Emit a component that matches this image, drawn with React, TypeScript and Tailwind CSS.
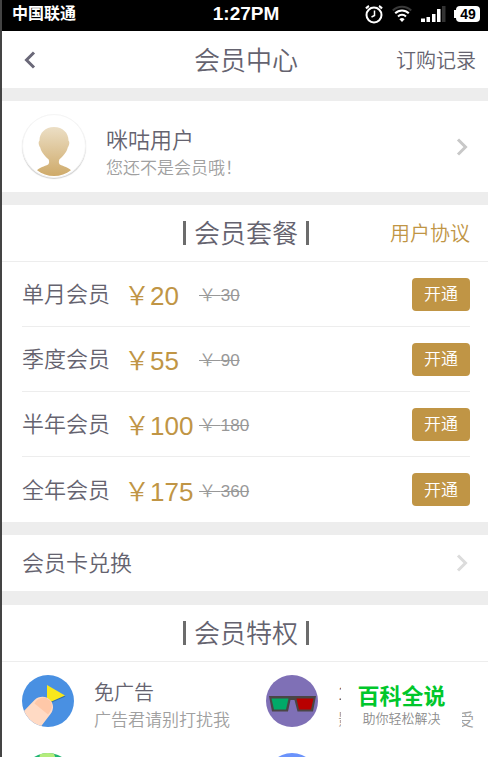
import { ReactNode } from "react";

interface Plan {
  name: string;
  price: number;
  oldPrice: number;
}

const plans: Plan[] = [
  { name: "单月会员", price: 20, oldPrice: 30 },
  { name: "季度会员", price: 55, oldPrice: 90 },
  { name: "半年会员", price: 100, oldPrice: 180 },
  { name: "全年会员", price: 175, oldPrice: 360 },
];

function Chevron({ className, left }: { className: string; left?: boolean }) {
  return (
    <svg viewBox="0 0 12 18" className={`w-3 h-[18px] shrink-0 ${className}`} fill="none" stroke="currentColor" strokeWidth="3" aria-hidden="true">
      <path d={left ? "M10 1.5 2.5 9 10 16.5" : "M2 1.5 9.5 9 2 16.5"} />
    </svg>
  );
}

function StatusBar() {
  return (
    <div className="grid grid-cols-[1fr_auto_1fr] items-center h-[31px] pb-1 pl-2.5 pr-2 bg-black text-white">
      <span className="text-base leading-6 font-bold">中国联通</span>
      <span className="text-[19px] leading-6 font-bold">1:27PM</span>
      <div className="flex items-center justify-end gap-2">
        <svg viewBox="0 0 20 20" className="w-5 h-5" fill="none" stroke="white" strokeWidth="2" aria-hidden="true">
          <circle cx="10" cy="11" r="7.5" />
          <path d="M10.5 6.5v5L7.5 13" strokeWidth="1.5" />
          <path d="M2 4.5A10 10 0 0 1 5 2M18 4.5A10 10 0 0 0 15 2" />
        </svg>
        <svg viewBox="0 0 20 18" className="w-5 h-[18px]" fill="none" stroke="white" strokeWidth="2" aria-hidden="true">
          <path d="M.8 5.5a13 13 0 0 1 18.400 0" stroke="#3a3a3a" />
          <path d="M3.200 8.300a9.600 9.600 0 0 1 13.600 0M6 11.500a5.700 5.700 0 0 1 8 0" />
          <path d="m10 17-2.600-2.800a3.800 3.800 0 0 1 5.200 0Z" fill="white" stroke="none" />
        </svg>
        <svg viewBox="0 0 26 18" className="w-[26px] h-[18px]" fill="white" aria-hidden="true">
          <path d="M1 13.500h4V17H1zM6.500 12h3.500v5H6.500zM12 9h3.500v8H12zM17 4h3.500v13H17z" />
          <path d="M22 1h3.500v16H22z" fill="#333" />
        </svg>
        <div className="flex items-center">
          <span className="w-[2px] h-2 bg-white" />
          <span className="w-6 h-4 rounded-sm bg-white text-black text-sm leading-4 font-bold text-center">49</span>
        </div>
      </div>
    </div>
  );
}

function SectionTitle({ children, action }: { children: ReactNode; action?: ReactNode }) {
  return (
    <div className="grid grid-cols-[1fr_auto_1fr] items-center h-[57px] pl-5 pr-[18px] border-b border-[#ededed]">
      <h2 className="col-start-2 flex items-center gap-2 text-[26px] leading-8">
        <span className="w-[3px] h-6 bg-[#6c6c6c]" />
        <span className="pt-0.5">{children}</span>
        <span className="w-[3px] h-6 bg-[#6c6c6c]" />
      </h2>
      {action}
    </div>
  );
}

function Avatar() {
  return (
    <div className="w-16 h-16 mb-0.5 shrink-0 rounded-full bg-white border border-[#f5f5f5] shadow-[0_1px_1px_#d0d0d0] overflow-hidden">
      <svg viewBox="0 0 64 64" className="w-full h-full" aria-hidden="true">
        <defs>
          <linearGradient id="gold" x1="0" y1="12" x2="0" y2="62" gradientUnits="userSpaceOnUse">
            <stop offset="0" stopColor="#ecdfc6" />
            <stop offset="1" stopColor="#cfab6b" />
          </linearGradient>
        </defs>
        <path
          d="M32 12.500c-9 0-15 6-15 14-1.500 1-.8 5 .8 7 1 5 5 9 8.700 12.500.8 2.500.6 4-.5 5C22 53 17 54 14.500 57c5 4 11 6 17.500 6s12.500-2 17.500-6C47 54 42 53 38 51c-1.100-1-1.300-2.500-.5-5 3.700-3.500 7.700-7.500 8.700-12.500 1.600-2 2.300-6 .8-7 0-8-6-14-15-14Z"
          fill="url(#gold)"
        />
      </svg>
    </div>
  );
}

function NoAdsIcon() {
  return (
    <svg viewBox="0 0 52 52" className="w-[52px] h-[52px] shrink-0" aria-hidden="true">
      <clipPath id="disc">
        <circle cx="26" cy="26" r="26" />
      </clipPath>
      <g clipPath="url(#disc)">
        <path d="M0 0h52v52H0z" fill="#4990e2" />
        <path d="M26 12v17L43.500 21.500Z" fill="#2f6ea8" />
        <path d="M25 10v18.500L43 20.500Z" fill="#f8e71c" />
        <path d="M0 38 12.500 25C17 20.500 25 20.500 29 26c3 4 2.500 9-.5 13L17 54H0Z" fill="#ffdac4" />
        <path d="M12.500 28.500c4-7 12-8 16-2 2.500 4 1.500 8-2.500 13Z" fill="#ffc8a8" />
      </g>
    </svg>
  );
}

function GlassesIcon() {
  return (
    <svg viewBox="0 0 52 52" className="w-[52px] h-[52px] shrink-0" aria-hidden="true">
      <circle cx="26" cy="26" r="26" fill="#7f70b6" />
      <path d="M3 21h47l-3 15.500H31.500L28.500 25h-4l-2.500 11.500H6Z" fill="#4a4545" />
      <path d="M5.500 23.500h17L20 34.500H8Z" fill="#00aa68" />
      <path d="M30.500 23.500h17L45 34.500H33Z" fill="#b80000" />
    </svg>
  );
}

function GreenIcon() {
  return (
    <svg viewBox="0 0 52 52" className="w-[52px] h-[52px]" aria-hidden="true">
      <circle cx="26" cy="26" r="26" fill="#1fb573" />
      <path d="M18 1.300a26 26 0 0 1 14-.6L36 12H16Z" fill="#b4ec7c" />
    </svg>
  );
}

function Benefit({ icon, title, children }: { icon: ReactNode; title: string; children: ReactNode }) {
  return (
    <li className="flex gap-5 items-start">
      {icon}
      <div className="w-[136px] whitespace-nowrap pt-1">
        <h3 className="text-[20px] leading-7">{title}</h3>
        <p className="flex justify-between pt-0.5 text-[17px] leading-6 text-[#a0a0a0]">{children}</p>
      </div>
    </li>
  );
}

export default function App() {
  return (
    <div className="h-screen overflow-hidden border-l-2 border-[#444] bg-[#ededed] text-[#65636f] font-['Liberation_Sans','Noto_Sans_CJK_SC',sans-serif]">
      <StatusBar />
      <header className="grid grid-cols-[1fr_auto_1fr] items-center h-[57px] pl-3.5 pr-3 bg-white">
        <button type="button" aria-label="返回" className="justify-self-start pl-2">
          <Chevron left className="text-[#6a6878]" />
        </button>
        <h1 className="pt-0.5 text-[26px] leading-8 font-[350]">会员中心</h1>
        <a href="#orders" className="justify-self-end pt-0.5 text-[20px] leading-7 font-[350]">订购记录</a>
      </header>

      <main className="flex flex-col gap-[13px] pt-[13px] font-[350]">
        <a href="#profile" className="flex items-center h-[91px] px-5 bg-white">
          <Avatar />
          <div className="flex-1 ml-5 pt-3">
            <p className="text-[22px] leading-8">咪咕用户</p>
            <p className="text-[17px] leading-6 text-[#a0a0a0]">您还不是会员哦！</p>
          </div>
          <Chevron className="text-[#c8c8c8]" />
        </a>

        <section className="bg-white">
          <SectionTitle
            action={<a href="#agreement" className="justify-self-end pt-0.5 text-[20px] leading-7 text-[#c09545]">用户协议</a>}
          >
            会员套餐
          </SectionTitle>
          <ul className="pl-5 pr-[18px]">
            {plans.map((plan) => (
              <li key={plan.name} className="flex items-center h-[65px] border-b border-[#ededed] last:border-b-0">
                <span className="pt-0.5 text-[22px] leading-8">{plan.name}</span>
                <span className="min-w-[75px] ml-3.5 pt-1 text-[26px] leading-8 text-[#c09545]">￥{plan.price}</span>
                <del className="pt-1 text-[17px] leading-6 text-[#989898]">￥ {plan.oldPrice}</del>
                <button type="button" className="ml-auto w-[58px] h-[33px] pt-0.5 rounded-sm bg-[#c09545] text-white text-[17px] leading-6">
                  开通
                </button>
              </li>
            ))}
          </ul>
        </section>

        <a href="#redeem" className="flex items-center justify-between h-14 mb-px px-5 bg-white text-[22px] leading-8">
          <span className="pt-0.5">会员卡兑换</span>
          <Chevron className="text-[#dcdcdc]" />
        </a>

        <section className="relative bg-white">
          <SectionTitle>会员特权</SectionTitle>
          <ul className="grid grid-cols-2 gap-x-[22px] gap-y-5 pl-5 pt-[13px]">
            <Benefit icon={<NoAdsIcon />} title="免广告">广告君请别打扰我</Benefit>
            <Benefit icon={<GlassesIcon />} title="1">
              <span>影</span>
              <span>受</span>
            </Benefit>
            <li><GreenIcon /></li>
            <li className="w-[52px] h-[52px] rounded-full bg-[#6b93fb]" />
          </ul>
          <div className="absolute top-[66px] right-[26px] w-[121px] h-[76px] pt-3 bg-white text-center">
            <strong className="block text-[22px] leading-7 font-bold text-[#00c72b]">百科全说</strong>
            <span className="block text-[13px] leading-4 text-[#8c8c8c]">助你轻松解决</span>
          </div>
        </section>
      </main>
    </div>
  );
}
